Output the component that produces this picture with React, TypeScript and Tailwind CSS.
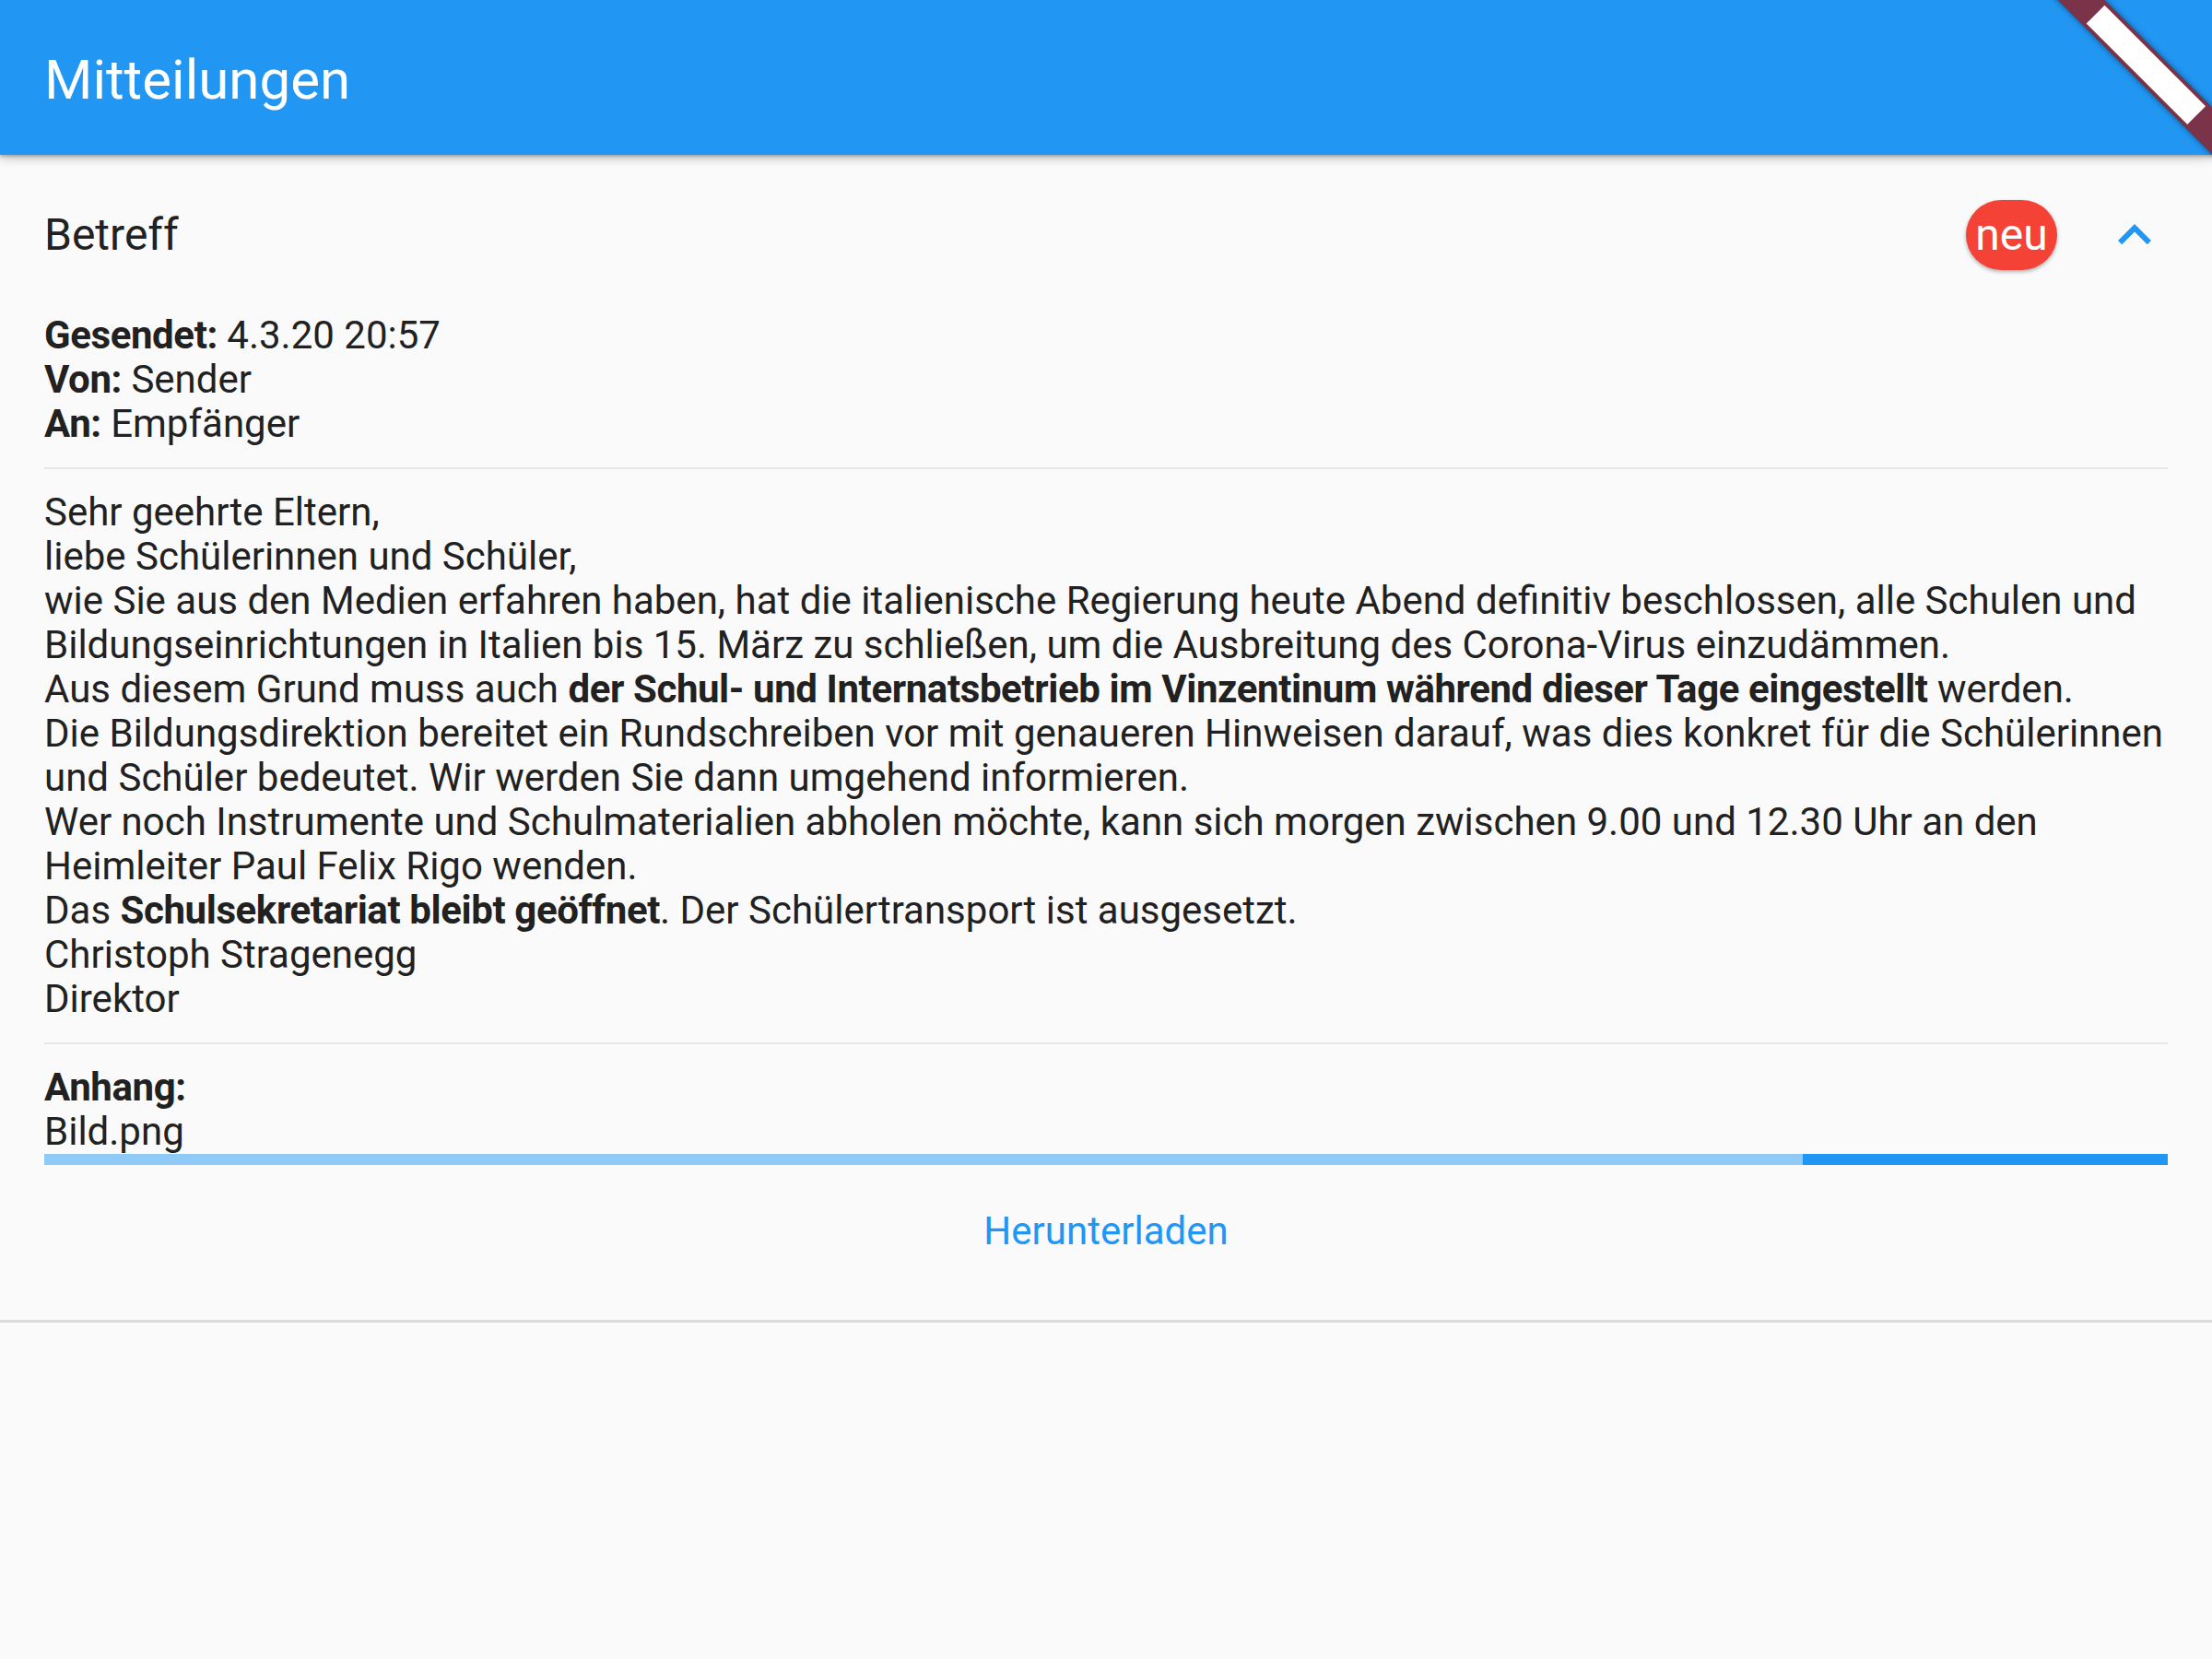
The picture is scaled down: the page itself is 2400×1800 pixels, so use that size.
import React from "react";

function ExpandLess() {
  return (
    <svg viewBox="0 0 24 24" className="h-[72px] w-[72px] fill-[#2196f3]">
      <path d="M12 8l-6 6 1.41 1.41L12 10.83l4.59 4.58L18 14z" />
    </svg>
  );
}

function Divider() {
  return (
    <div className="flex h-[48px] items-center">
      <div className="h-[2px] w-full bg-[#e7e7e7]" />
    </div>
  );
}

function B({ children }: { children: React.ReactNode }) {
  return <span className="font-bold tracking-[-0.4px]">{children}</span>;
}

const metaRows = [
  { label: "Gesendet:", value: "4.3.20 20:57" },
  { label: "Von:", value: "Sender" },
  { label: "An:", value: "Empfänger" },
];

export default function App() {
  return (
    <div className="relative min-h-[1800px] w-full overflow-hidden bg-[#fafafa] font-['Roboto',sans-serif] text-[#212121]">
      {/* app bar */}
      <header className="relative z-10 flex h-[168px] items-center bg-[#2196f3] px-[48px] pt-[6px] shadow-[0_4px_10px_rgba(0,0,0,0.22),0_2px_3px_rgba(0,0,0,0.2)]">
        <h1 className="text-[60px] font-normal leading-none text-white">Mitteilungen</h1>
      </header>

      {/* debug banner */}
      <div className="absolute left-[2128px] top-[52px] z-20 flex h-[36px] w-[400px] rotate-45 items-center justify-center bg-[#7a3349] shadow-[0_0_6px_rgba(0,0,0,0.45)]">
        <div className="h-[28px] w-[155px] bg-white" />
      </div>

      <section className="border-b-[3px] border-[#dadada]">
        <div className="flex h-[172px] items-center gap-[48px] px-[48px] pt-[2px]">
          <div className="flex-1 text-[48px] leading-none">Betreff</div>
          <div className="flex h-[76px] w-[99px] items-center justify-center rounded-full bg-[#f44336] text-[48px] leading-none text-white shadow-[0_2px_4px_rgba(0,0,0,0.3)]">
            neu
          </div>
          <ExpandLess />
        </div>

        <div className="px-[48px] text-[42px] leading-[48px]">
          <div>
            {metaRows.map((row) => (
              <div key={row.label}>
                <B>{row.label}</B> {row.value}
              </div>
            ))}
          </div>

          <Divider />

          <div>
            <div>Sehr geehrte Eltern,</div>
            <div>liebe Schülerinnen und Schüler,</div>
            <div>
              wie Sie aus den Medien erfahren haben, hat die italienische Regierung heute Abend definitiv beschlossen, alle Schulen und Bildungseinrichtungen in Italien bis 15. März zu schließen, um die Ausbreitung des Corona-Virus einzudämmen.
            </div>
            <div>
              Aus diesem Grund muss auch{" "}
              <B>der Schul- und Internatsbetrieb im Vinzentinum während dieser Tage eingestellt</B>{" "}
              werden.
            </div>
            <div>
              Die Bildungsdirektion bereitet ein Rundschreiben vor mit genaueren Hinweisen darauf, was dies konkret für die Schülerinnen und Schüler bedeutet. Wir werden Sie dann umgehend informieren.
            </div>
            <div>
              Wer noch Instrumente und Schulmaterialien abholen möchte, kann sich morgen zwischen 9.00 und 12.30 Uhr an den Heimleiter Paul Felix Rigo wenden.
            </div>
            <div>
              Das <B>Schulsekretariat bleibt geöffnet</B>. Der Schülertransport ist ausgesetzt.
            </div>
            <div>Christoph Stragenegg</div>
            <div>Direktor</div>
          </div>

          <Divider />

          <div>
            <B>Anhang:</B>
            <div>Bild.png</div>
          </div>

          {/* download progress */}
          <div className="flex h-[12px] w-full bg-[#90caf9]">
            <div className="ml-auto h-full w-[396px] bg-[#2196f3]" />
          </div>

          <div className="flex h-[168px] justify-center pt-[24px]">
            <button className="h-[96px] px-[48px] text-[42px] leading-none text-[#2196f3]">Herunterladen</button>
          </div>
        </div>
      </section>
    </div>
  );
}
